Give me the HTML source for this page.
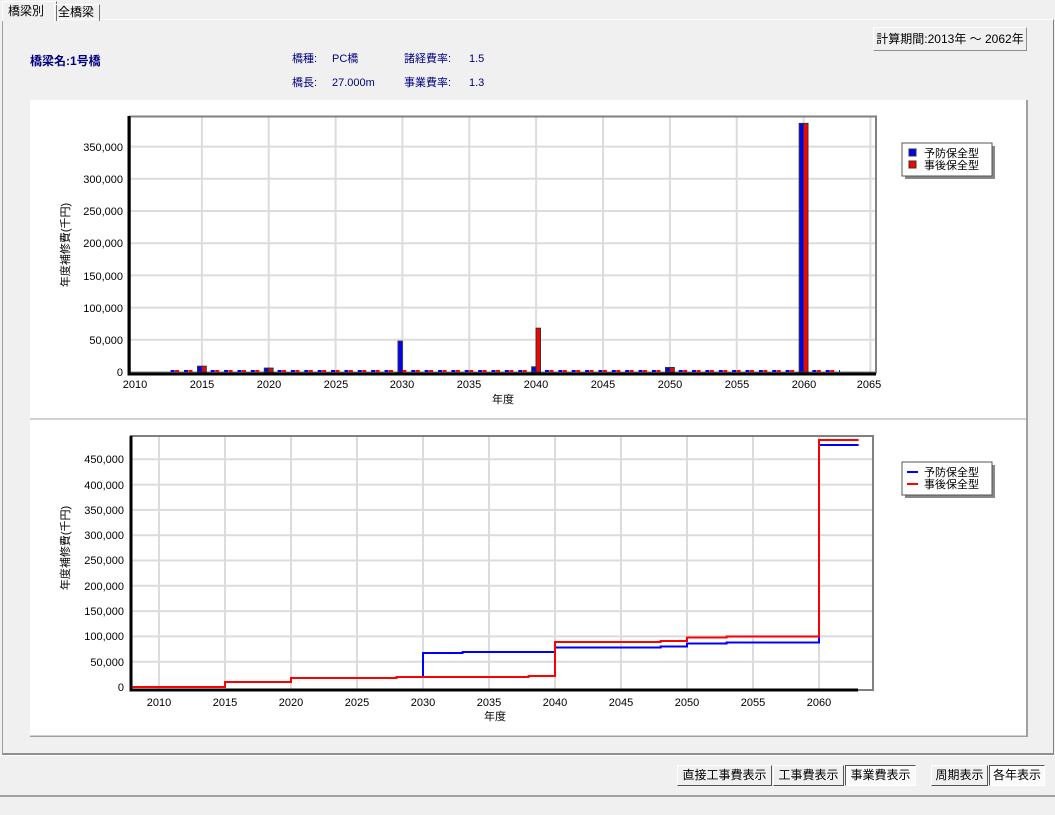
<!DOCTYPE html>
<html><head><meta charset="utf-8"><style>
body{margin:0;width:1055px;height:815px;background:#f0f0f0;font-family:"Liberation Sans","Noto Sans CJK JP",sans-serif;font-size:12px;position:relative;overflow:hidden}
.a{position:absolute;white-space:nowrap}
.n{color:#000080;font-size:11px;line-height:14px;height:14px}
.btn{position:absolute;height:21px;top:765px;background:#f0f0f0;border:1px solid;border-color:#fff #555 #555 #fff;box-sizing:border-box;font-size:12px;text-align:center;line-height:19px}
.pr{background:#fafafa;border-color:#555 #fff #fff #555}
</style></head><body>
<div class="a" style="left:2px;top:19px;width:1050px;height:733px;border:1px solid #a0a0a0;border-top-color:#fff;border-right-color:#808080;border-bottom:2px solid #909090"></div>
<div class="a" style="left:2px;top:1px;width:48px;height:19px;background:#f0f0f0;border:1px solid #fff;border-right-color:#707070;border-bottom:none;font-size:12px;line-height:18px;padding-left:5px">橋梁別</div>
<div class="a" style="left:54px;top:4px;width:41px;height:16px;border:1px solid #fff;border-right-color:#707070;border-bottom:none;font-size:12px;line-height:15px;padding-left:3px">全橋梁</div>
<div class="a" style="left:30px;top:53px;color:#000080;font-weight:bold;font-size:12px;line-height:16px">橋梁名:1号橋</div>
<div class="a n" style="left:292px;top:52px">橋種:</div><div class="a n" style="left:332px;top:52px">PC橋</div>
<div class="a n" style="left:404px;top:52px">諸経費率:</div><div class="a n" style="left:469px;top:52px">1.5</div>
<div class="a n" style="left:292px;top:76px">橋長:</div><div class="a n" style="left:332px;top:76px">27.000m</div>
<div class="a n" style="left:404px;top:76px">事業費率:</div><div class="a n" style="left:469px;top:76px">1.3</div>
<div class="a" style="left:873px;top:27px;width:154px;height:24px;box-sizing:border-box;border:1px solid;border-color:#fff #909090 #909090 #fff;font-size:12px;line-height:22px;text-align:center">計算期間:2013年 ～ 2062年</div>
<svg class="a" style="left:30px;top:100px" width="998" height="637" viewBox="30 100 998 637" font-family="Liberation Sans,Noto Sans CJK JP,sans-serif" font-size="11">
<rect x="30" y="100" width="998" height="637" fill="#fff"/>
<line x1="1027" y1="100" x2="1027" y2="737" stroke="#a0a0a0" stroke-width="2"/>
<line x1="30" y1="419" x2="1027" y2="419" stroke="#a0a0a0"/>
<line x1="30" y1="736.5" x2="1027" y2="736.5" stroke="#a0a0a0" stroke-width="2"/>
<g stroke="#dcdcdc" stroke-width="2">
<path d="M201.9 116V372M268.7 116V372M335.6 116V372M402.4 116V372M469.3 116V372M536.1 116V372M603 116V372M669.9 116V372M736.7 116V372M803.6 116V372M870.4 116V372"/>
<path d="M131 339.8H875M131 307.6H875M131 275.4H875M131 243.2H875M131 211H875M131 178.8H875M131 146.6H875"/>
</g>
<rect x="130" y="116.5" width="746" height="256" fill="none" stroke="#808080" stroke-width="2"/>
<line x1="170.6" y1="371" x2="840" y2="371" stroke="#0000ff" stroke-width="2" stroke-dasharray="4 9.37"/>
<line x1="175.1" y1="371" x2="840" y2="371" stroke="#ff0000" stroke-width="2" stroke-dasharray="4 9.37"/>
<g stroke="#333" stroke-width="1">
<rect x="197.5" y="366.2" width="4.4" height="5.8" fill="#00f"/><rect x="201.9" y="366.2" width="4.4" height="5.8" fill="#f00"/>
<rect x="264.3" y="368.1" width="4.4" height="3.9" fill="#00f"/><rect x="268.7" y="368.1" width="4.4" height="3.9" fill="#f00"/>
<rect x="398" y="341.1" width="4.4" height="30.9" fill="#00f"/>
<rect x="531.7" y="366.8" width="4.4" height="5.2" fill="#00f"/><rect x="536.1" y="328.2" width="4.4" height="43.8" fill="#f00"/>
<rect x="665.5" y="367.5" width="4.4" height="4.5" fill="#00f"/><rect x="669.9" y="367.5" width="4.4" height="4.5" fill="#f00"/>
<rect x="799.2" y="123.4" width="4.4" height="248.6" fill="#00f"/><rect x="803.6" y="123.4" width="4.4" height="248.6" fill="#f00"/>
</g>
<path d="M129 116V374H876" fill="none" stroke="#000" stroke-width="3"/>
<g text-anchor="end">
<text x="123" y="376">0</text><text x="123" y="344">50,000</text><text x="123" y="312">100,000</text><text x="123" y="280">150,000</text><text x="123" y="247">200,000</text><text x="123" y="215">250,000</text><text x="123" y="183">300,000</text><text x="123" y="151">350,000</text>
</g>
<g text-anchor="middle">
<text x="135" y="388">2010</text><text x="202" y="388">2015</text><text x="269" y="388">2020</text><text x="336" y="388">2025</text><text x="402" y="388">2030</text><text x="469" y="388">2035</text><text x="536" y="388">2040</text><text x="603" y="388">2045</text><text x="670" y="388">2050</text><text x="737" y="388">2055</text><text x="804" y="388">2060</text><text x="869" y="388">2065</text>
<text x="503" y="403">年度</text>
<text transform="translate(69,245) rotate(-90)">年度補修費(千円)</text>
</g>
<rect x="905" y="146" width="90" height="33" fill="#888"/>
<rect x="902" y="143" width="90" height="33" fill="#fff" stroke="#555"/>
<rect x="909" y="149" width="7" height="7" fill="#00f" stroke="#333"/><rect x="909" y="161" width="7" height="7" fill="#f00" stroke="#333"/>
<text x="924" y="157">予防保全型</text><text x="924" y="169">事後保全型</text>
<g stroke="#dcdcdc" stroke-width="2">
<path d="M159 436V689M225 436V689M291 436V689M357 436V689M423 436V689M489 436V689M555 436V689M621 436V689M687 436V689M753 436V689M819 436V689"/>
<path d="M132 661.7H873M132 636.4H873M132 611.1H873M132 585.8H873M132 560.5H873M132 535.2H873M132 509.9H873M132 484.6H873M132 459.3H873"/>
</g>
<rect x="131" y="436" width="742" height="254" fill="none" stroke="#808080" stroke-width="2"/>
<path d="M423 677V653H462.6V652H555V647.5H660.6V646.5H687V643.5H726.6V642.5H819V445H858.6" fill="none" stroke="#00f" stroke-width="2"/>
<path d="M132.6 687H225V682H291V678H396.6V677H528.6V676H555V642H660.6V641H687V637.5H726.6V636.5H819V440H858.6" fill="none" stroke="#f00" stroke-width="2"/>
<path d="M131 436V690H858" fill="none" stroke="#000" stroke-width="3"/>
<g text-anchor="end">
<text x="124" y="691">0</text><text x="124" y="666">50,000</text><text x="124" y="640">100,000</text><text x="124" y="615">150,000</text><text x="124" y="590">200,000</text><text x="124" y="564">250,000</text><text x="124" y="539">300,000</text><text x="124" y="514">350,000</text><text x="124" y="489">400,000</text><text x="124" y="463">450,000</text>
</g>
<g text-anchor="middle">
<text x="159" y="706">2010</text><text x="225" y="706">2015</text><text x="291" y="706">2020</text><text x="357" y="706">2025</text><text x="423" y="706">2030</text><text x="489" y="706">2035</text><text x="555" y="706">2040</text><text x="621" y="706">2045</text><text x="687" y="706">2050</text><text x="753" y="706">2055</text><text x="819" y="706">2060</text>
<text x="495" y="720">年度</text>
<text transform="translate(69,548) rotate(-90)">年度補修費(千円)</text>
</g>
<rect x="905" y="465" width="90" height="33" fill="#888"/>
<rect x="902" y="462" width="90" height="33" fill="#fff" stroke="#555"/>
<line x1="907" y1="472" x2="918" y2="472" stroke="#00f" stroke-width="2"/><line x1="907" y1="484" x2="918" y2="484" stroke="#f00" stroke-width="2"/>
<text x="924" y="476">予防保全型</text><text x="924" y="488">事後保全型</text>
</svg>
<div class="a" style="left:0;top:755px;width:1055px;height:1px;background:#fff"></div>
<div class="a" style="left:0;top:795px;width:1055px;height:2px;background:#a0a0a0"></div>
<div class="btn" style="left:677px;width:95px">直接工事費表示</div>
<div class="btn" style="left:773px;width:71px">工事費表示</div>
<div class="btn pr" style="left:845px;width:71px">事業費表示</div>
<div class="btn" style="left:931px;width:57px">周期表示</div>
<div class="btn pr" style="left:989px;width:56px">各年表示</div>
</body></html>
